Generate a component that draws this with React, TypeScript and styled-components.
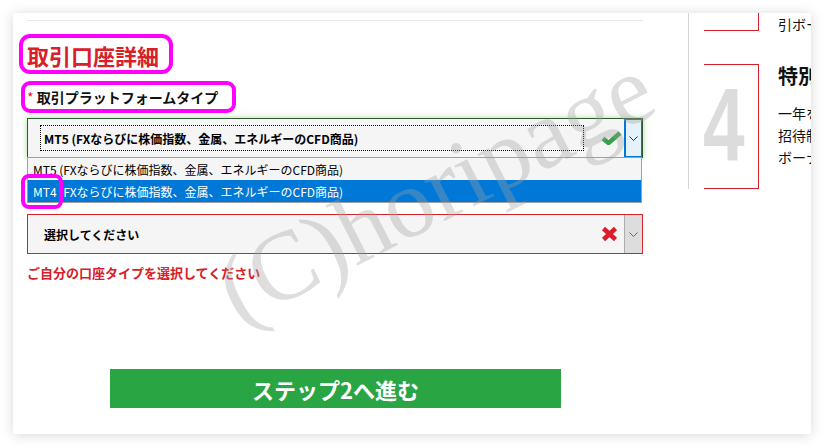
import styled, { createGlobalStyle } from 'styled-components';

const GlobalStyle = createGlobalStyle`
  html, body {
    margin: 0;
    padding: 0;
    background: #fff;
    font-family: "Noto Sans CJK JP", "Noto Sans", sans-serif;
  }
`;

const Chevron = ({ color }: { color: string }) => (
  <svg width="9" height="5" viewBox="0 0 9 5">
    <polyline points="0.5,0.5 4.5,4.5 8.5,0.5" fill="none" stroke={color} strokeWidth="1" />
  </svg>
);

const CheckIcon = () => (
  <svg width="21" height="14" viewBox="0 0 21 14">
    <path d="M2 7.5 L7.5 12 L19 2" fill="none" stroke="#3aa049" strokeWidth="4.5" />
  </svg>
);

const CrossIcon = () => (
  <svg width="17" height="16" viewBox="0 0 17 16">
    <path d="M2.5 2.5 L14.5 13.5 M14.5 2.5 L2.5 13.5" fill="none" stroke="#dc1b2b" strokeWidth="4.5" />
  </svg>
);

const App = () => {
  return (
    <>
      <GlobalStyle />
      <Panel>
        <LeftColumn>
          <Rule />
          <Title>取引口座詳細</Title>
          <FieldLabel>
            <span className="star">*</span> 取引プラットフォームタイプ
          </FieldLabel>
          <SelectWrap>
            <SelectBox $state="valid">
              <FocusRect $focused>MT5 (FXならびに株価指数、金属、エネルギーのCFD商品)</FocusRect>
              <StatusIcon>
                <CheckIcon />
              </StatusIcon>
              <DropButton $active>
                <Chevron color="#333" />
              </DropButton>
            </SelectBox>
            <Menu>
              <Option>MT5 (FXならびに株価指数、金属、エネルギーのCFD商品)</Option>
              <Option $selected>MT4 (FXならびに株価指数、金属、エネルギーのCFD商品)</Option>
            </Menu>
          </SelectWrap>
          <SelectWrap $gap={56}>
            <SelectBox $state="error">
              <FocusRect>選択してください</FocusRect>
              <StatusIcon>
                <CrossIcon />
              </StatusIcon>
              <DropButton>
                <Chevron color="#666" />
              </DropButton>
            </SelectBox>
          </SelectWrap>
          <ErrorText>ご自分の口座タイプを選択してください</ErrorText>
          <NextButton>ステップ2へ進む</NextButton>
        </LeftColumn>

        <RightColumn>
          <StepRow>
            <Bracket $cut $height={18} />
            <StepText>
              <p>引ボー</p>
            </StepText>
          </StepRow>
          <StepRow $gap={29}>
            <Bracket $height={125}>
              <StepNumber>4</StepNumber>
            </Bracket>
            <StepText>
              <h3>特別</h3>
              <p>一年を</p>
              <p>招待制</p>
              <p>ボーナ</p>
            </StepText>
          </StepRow>
        </RightColumn>

        <Watermark>(C)horipage</Watermark>
        <Marker $left={6} $top={21} $width={154} $height={40} $radius={11} />
        <Marker $left={8} $top={68} $width={215} $height={32} $radius={9} />
        <Marker $left={8} $top={161} $width={42} $height={35} $radius={8} />
      </Panel>
    </>
  );
};

export default App;

const Panel = styled.div`
  position: relative;
  margin: 13px;
  width: 798px;
  height: 421px;
  background: #fff;
  box-shadow: 0 1px 12px rgba(0, 0, 0, 0.16);
  display: flex;
  align-items: flex-start;
  overflow: hidden;
`;

const LeftColumn = styled.div`
  width: 616px;
  margin-left: 14px;
  padding-top: 7px;
  display: flex;
  flex-direction: column;
`;

const Rule = styled.div`
  height: 1px;
  background: #e8e8e8;
`;

const Title = styled.h2`
  margin: 19px 0 0;
  font-size: 22px;
  line-height: 30px;
  font-weight: 700;
  color: #d7202a;
`;

const FieldLabel = styled.div`
  margin-top: 17px;
  font-size: 14px;
  line-height: 20px;
  font-weight: 700;
  color: #111;
  .star {
    color: #d7202a;
    font-weight: 400;
  }
`;

const SelectWrap = styled.div<{ $gap?: number }>`
  position: relative;
  margin-top: ${(p) => p.$gap ?? 11}px;
`;

const SelectBox = styled.div<{ $state: 'valid' | 'error' }>`
  box-sizing: border-box;
  height: 40px;
  display: flex;
  align-items: center;
  background: #f5f5f5;
  border: 1px solid ${(p) => (p.$state === 'valid' ? '#2f5a30' : '#d7202a')};
  box-shadow: ${(p) => (p.$state === 'valid' ? '0 0 6px rgba(110, 190, 80, 0.55)' : 'none')};
`;

const FocusRect = styled.div<{ $focused?: boolean }>`
  box-sizing: border-box;
  width: 544px;
  height: 26px;
  margin-left: 12px;
  padding-left: 3px;
  display: flex;
  align-items: center;
  border: 1px dotted ${(p) => (p.$focused ? '#000' : 'transparent')};
  font-size: 12px;
  font-weight: 700;
  color: #000;
  white-space: nowrap;
`;

const StatusIcon = styled.div`
  margin-left: 17px;
  width: 23px;
  display: flex;
  align-items: center;
`;

const DropButton = styled.div<{ $active?: boolean }>`
  box-sizing: border-box;
  margin-left: auto;
  width: 18px;
  height: 100%;
  display: flex;
  align-items: center;
  justify-content: center;
  background: ${(p) => (p.$active ? '#e5f1fb' : '#dddddd')};
  border: 1px solid ${(p) => (p.$active ? '#0078d7' : '#adadad')};
  border-width: ${(p) => (p.$active ? '1px 1px 1px 2px' : '0 0 0 1px')};
`;

const Menu = styled.div`
  position: absolute;
  left: 0;
  top: 39px;
  width: 615px;
  box-sizing: border-box;
  border: 1px solid #a0a0a0;
  background: #f5f5f5;
  z-index: 2;
`;

const Option = styled.div<{ $selected?: boolean }>`
  height: 22px;
  padding-left: 5px;
  display: flex;
  align-items: center;
  font-size: 12px;
  white-space: nowrap;
  background: ${(p) => (p.$selected ? '#0078d7' : '#f5f5f5')};
  color: ${(p) => (p.$selected ? '#fff' : '#000')};
`;

const ErrorText = styled.div`
  margin-top: 9px;
  font-size: 13px;
  line-height: 20px;
  font-weight: 700;
  color: #d7202a;
`;

const NextButton = styled.div`
  margin: 86px 0 0 83px;
  width: 451px;
  height: 39px;
  display: flex;
  align-items: center;
  justify-content: center;
  background: #2aa544;
  color: #fff;
  font-size: 22px;
  font-weight: 700;
`;

const RightColumn = styled.div`
  margin-left: 45px;
  height: 176px;
  padding-left: 15px;
  border-left: 1px solid #d4d4d4;
  display: flex;
  flex-direction: column;
  white-space: nowrap;
`;

const StepRow = styled.div<{ $gap?: number }>`
  display: flex;
  margin-top: ${(p) => p.$gap ?? 0}px;
`;

const Bracket = styled.div<{ $cut?: boolean; $height: number }>`
  box-sizing: border-box;
  width: 55px;
  height: ${(p) => p.$height}px;
  flex-shrink: 0;
  border: 1px solid #d7202a;
  border-left: none;
  border-top-width: ${(p) => (p.$cut ? 0 : 1)}px;
  display: flex;
  align-items: center;
`;

const StepNumber = styled.span`
  display: block;
  font-family: "Liberation Sans", Arial, sans-serif;
  font-size: 104px;
  font-weight: 700;
  line-height: 1;
  color: #dcdcdc;
  transform: scaleX(0.72);
  transform-origin: left center;
  margin: -3px 0 0 -1px;
`;

const StepText = styled.div`
  padding-left: 19px;
  color: #111;
  h3 {
    margin: 0 0 15px;
    font-size: 20px;
    line-height: 24px;
    font-weight: 700;
  }
  p {
    margin: 1px 0 0;
    font-size: 14px;
    line-height: 21px;
  }
`;

const Watermark = styled.div`
  position: absolute;
  left: 422px;
  top: 176px;
  transform: translate(-50%, -50%) rotate(-27deg);
  font-family: "Liberation Serif", serif;
  font-size: 98px;
  line-height: 1;
  color: rgba(160, 160, 160, 0.35);
  white-space: nowrap;
  pointer-events: none;
  z-index: 3;
`;

const Marker = styled.div<{ $left: number; $top: number; $width: number; $height: number; $radius: number }>`
  position: absolute;
  box-sizing: border-box;
  left: ${(p) => p.$left}px;
  top: ${(p) => p.$top}px;
  width: ${(p) => p.$width}px;
  height: ${(p) => p.$height}px;
  border: 4px solid #ff00ff;
  border-radius: ${(p) => p.$radius}px;
  z-index: 4;
`;
